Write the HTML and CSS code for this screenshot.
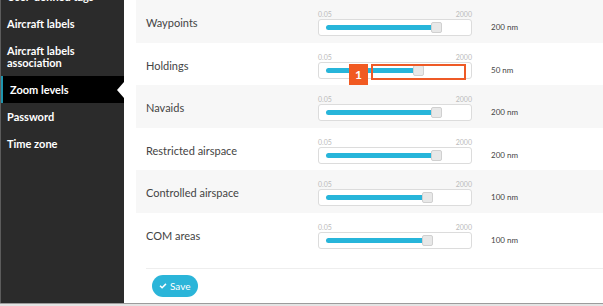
FILE: index.html
```html
<!doctype html>
<html lang="en">
<head>
    <meta charset="utf-8">
    <title>Settings - Zoom levels</title>
    <link rel="stylesheet" href="styles.css">
</head>
<body>
    <div class="app">
        <nav class="sidebar">
            <ul class="menu">
                <li>User-defined tags</li>
                <li>Aircraft labels</li>
                <li>Aircraft labels<br>association</li>
                <li class="active">Zoom levels</li>
                <li>Password</li>
                <li>Time zone</li>
            </ul>
        </nav>
        <main class="content">
            <div class="rows">
                <div class="row">
                    <div class="name">Waypoints</div>
                    <div class="slider">
                        <div class="scale"><span>0.05</span><span>2000</span></div>
                        <div class="track">
                            <div class="fill" style="width: 109px"></div>
                            <div class="handle" style="left: 112px"></div>
                        </div>
                    </div>
                    <div class="value">200 nm</div>
                </div>
                <div class="row">
                    <div class="name">Holdings</div>
                    <div class="slider">
                        <div class="scale"><span>0.05</span><span>2000</span></div>
                        <div class="track">
                            <div class="fill" style="width: 91px"></div>
                            <div class="handle" style="left: 94px"></div>
                            <div class="highlight"></div>
                            <div class="badge">1</div>
                        </div>
                    </div>
                    <div class="value">50 nm</div>
                </div>
                <div class="row">
                    <div class="name">Navaids</div>
                    <div class="slider">
                        <div class="scale"><span>0.05</span><span>2000</span></div>
                        <div class="track">
                            <div class="fill" style="width: 109px"></div>
                            <div class="handle" style="left: 112px"></div>
                        </div>
                    </div>
                    <div class="value">200 nm</div>
                </div>
                <div class="row">
                    <div class="name">Restricted airspace</div>
                    <div class="slider">
                        <div class="scale"><span>0.05</span><span>2000</span></div>
                        <div class="track">
                            <div class="fill" style="width: 109px"></div>
                            <div class="handle" style="left: 112px"></div>
                        </div>
                    </div>
                    <div class="value">200 nm</div>
                </div>
                <div class="row">
                    <div class="name">Controlled airspace</div>
                    <div class="slider">
                        <div class="scale"><span>0.05</span><span>2000</span></div>
                        <div class="track">
                            <div class="fill" style="width: 100px"></div>
                            <div class="handle" style="left: 103px"></div>
                        </div>
                    </div>
                    <div class="value">100 nm</div>
                </div>
                <div class="row">
                    <div class="name">COM areas</div>
                    <div class="slider">
                        <div class="scale"><span>0.05</span><span>2000</span></div>
                        <div class="track">
                            <div class="fill" style="width: 100px"></div>
                            <div class="handle" style="left: 103px"></div>
                        </div>
                    </div>
                    <div class="value">100 nm</div>
                </div>
            </div>
            <div class="actions">
                <button class="save" type="button">
                    <svg class="check" viewBox="0 0 16 16" width="8" height="8"><path d="M1 8.5 L3.2 6.3 L6.2 9.3 L12.8 2.7 L15 4.9 L6.2 13.7 Z" fill="#fff"/></svg>
                    Save
                </button>
            </div>
        </main>
    </div>
</body>
</html>
```

FILE: styles.css
```css
body {
    margin: 0;
    font-family: Lato, "Open Sans", sans-serif;
    background-color: #e4e4e4;
    overflow: hidden;
}

.app {
    display: flex;
    height: 303px;
    border-bottom: 1px solid #9c9c9c;
    background-color: #fff;
    overflow: hidden;
}

.sidebar {
    width: 123px;
    flex: none;
    background-color: #2b2b2b;
    border-left: 1px solid #5c5c5c;
    overflow: hidden;
}

.menu {
    list-style: none;
    margin: -17px 0 0 0;
    padding: 0;
}

.menu li {
    position: relative;
    padding: 8px 6px 7px 6px;
    line-height: 12px;
    font-size: 11px;
    font-weight: bold;
    color: #fff;
}

.menu li.active {
    background-color: #000;
    border-left: 2px solid #1e94ad;
    padding-left: 7px;
}

.menu li.active:after {
    content: "";
    position: absolute;
    right: 0;
    top: 6px;
    border-style: solid;
    border-width: 8px 7px 8px 0;
    border-color: transparent #fff transparent transparent;
}

.content {
    flex: 1;
    padding-left: 12px;
    overflow: hidden;
}

.row {
    display: flex;
    align-items: flex-start;
    box-sizing: border-box;
    height: 42px;
    padding: 9px 0 0 10px;
    background-color: #fff;
}

.row:nth-child(odd) {
    height: 43px;
    background-color: #f7f7f7;
}

.name {
    width: 172px;
    flex: none;
    margin-top: 6px;
    line-height: 16px;
    font-size: 11px;
    color: #444;
}

.slider {
    width: 154px;
    flex: none;
}

.scale {
    display: flex;
    justify-content: space-between;
    height: 10px;
    line-height: 10px;
    font-size: 7px;
    color: #bbb;
}

.track {
    position: relative;
    box-sizing: border-box;
    height: 17px;
    border: 1px solid #dcdcdc;
    border-radius: 3px;
    background-color: #fff;
}

.fill {
    position: absolute;
    left: 7px;
    top: 5px;
    height: 5px;
    border-radius: 3px;
    background-color: #27b5da;
}

.handle {
    position: absolute;
    top: 2px;
    box-sizing: border-box;
    width: 11px;
    height: 11px;
    border: 1px solid #d0d0d0;
    border-radius: 2px;
    background-color: #e8e8e8;
}

.highlight {
    position: absolute;
    left: 52px;
    top: 1px;
    box-sizing: border-box;
    width: 95px;
    height: 16px;
    border: 2px solid #ee5a26;
}

.badge {
    position: absolute;
    left: 30px;
    top: 1px;
    width: 19px;
    height: 21px;
    line-height: 21px;
    text-align: center;
    font-size: 12px;
    font-weight: bold;
    color: #fff;
    background-color: #f15a22;
}

.value {
    margin: 10px 0 0 19px;
    line-height: 17px;
    font-size: 8px;
    color: #444;
}

.actions {
    margin: 13px 0 0 10px;
    padding: 6px 0 0 6px;
    border-top: 1px solid #eee;
}

.save {
    display: flex;
    align-items: center;
    gap: 3px;
    height: 22px;
    width: 46px;
    padding: 0 0 0 7px;
    border: none;
    border-radius: 11px;
    background-color: #2bb5d9;
    color: #fff;
    font-family: Lato, sans-serif;
    font-size: 10px;
}
```
